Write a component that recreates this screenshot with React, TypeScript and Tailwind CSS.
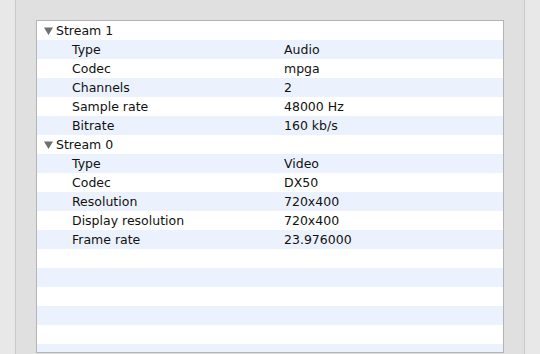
const streams = [
  {
    name: "Stream 1",
    props: [
      ["Type", "Audio"],
      ["Codec", "mpga"],
      ["Channels", "2"],
      ["Sample rate", "48000 Hz"],
      ["Bitrate", "160 kb/s"],
    ],
  },
  {
    name: "Stream 0",
    props: [
      ["Type", "Video"],
      ["Codec", "DX50"],
      ["Resolution", "720x400"],
      ["Display resolution", "720x400"],
      ["Frame rate", "23.976000"],
    ],
  },
]

type Row = { kind: "group"; label: string } | { kind: "item"; label: string; value: string } | { kind: "empty" }

function Triangle() {
  return (
    <svg width="9" height="8" viewBox="0 0 9 8" className="mr-[3px] -mt-[1px]">
      <polygon points="0,0.5 9,0.5 4.5,8" fill="#6f6f6f" />
    </svg>
  )
}

export default function App() {
  const rows: Row[] = []
  for (const s of streams) {
    rows.push({ kind: "group", label: s.name })
    for (const [label, value] of s.props) rows.push({ kind: "item", label, value })
  }
  while (rows.length < 18) rows.push({ kind: "empty" })

  return (
    <div className="w-[540px] h-[354px] overflow-hidden flex bg-[#e0e0e0] font-['DejaVu_Sans',sans-serif] text-[12.5px] text-[#111]">
      <div className="w-[16px] bg-[#e8e8e8] border-r border-[#c9c9c9]" />
      <div className="flex-1 pt-[20px] pl-[20px] pr-[20px]">
        <div className="h-[333px] border border-[#b4b4b4] bg-white overflow-hidden">
          {rows.map((r, i) => (
            <div
              key={i}
              className={`h-[19px] pt-[2px] flex items-center ${i % 2 === 1 ? "bg-[#ecf2fd]" : "bg-white"}`}
            >
              {r.kind === "group" && (
                <div className="flex items-center pl-[7px]">
                  <Triangle />
                  <span>{r.label}</span>
                </div>
              )}
              {r.kind === "item" && (
                <>
                  <span className="pl-[35px] w-[247px]">{r.label}</span>
                  <span>{r.value}</span>
                </>
              )}
            </div>
          ))}
        </div>
      </div>
      <div className="w-[16px] bg-[#e8e8e8] border-l border-[#c9c9c9]" />
    </div>
  )
}
